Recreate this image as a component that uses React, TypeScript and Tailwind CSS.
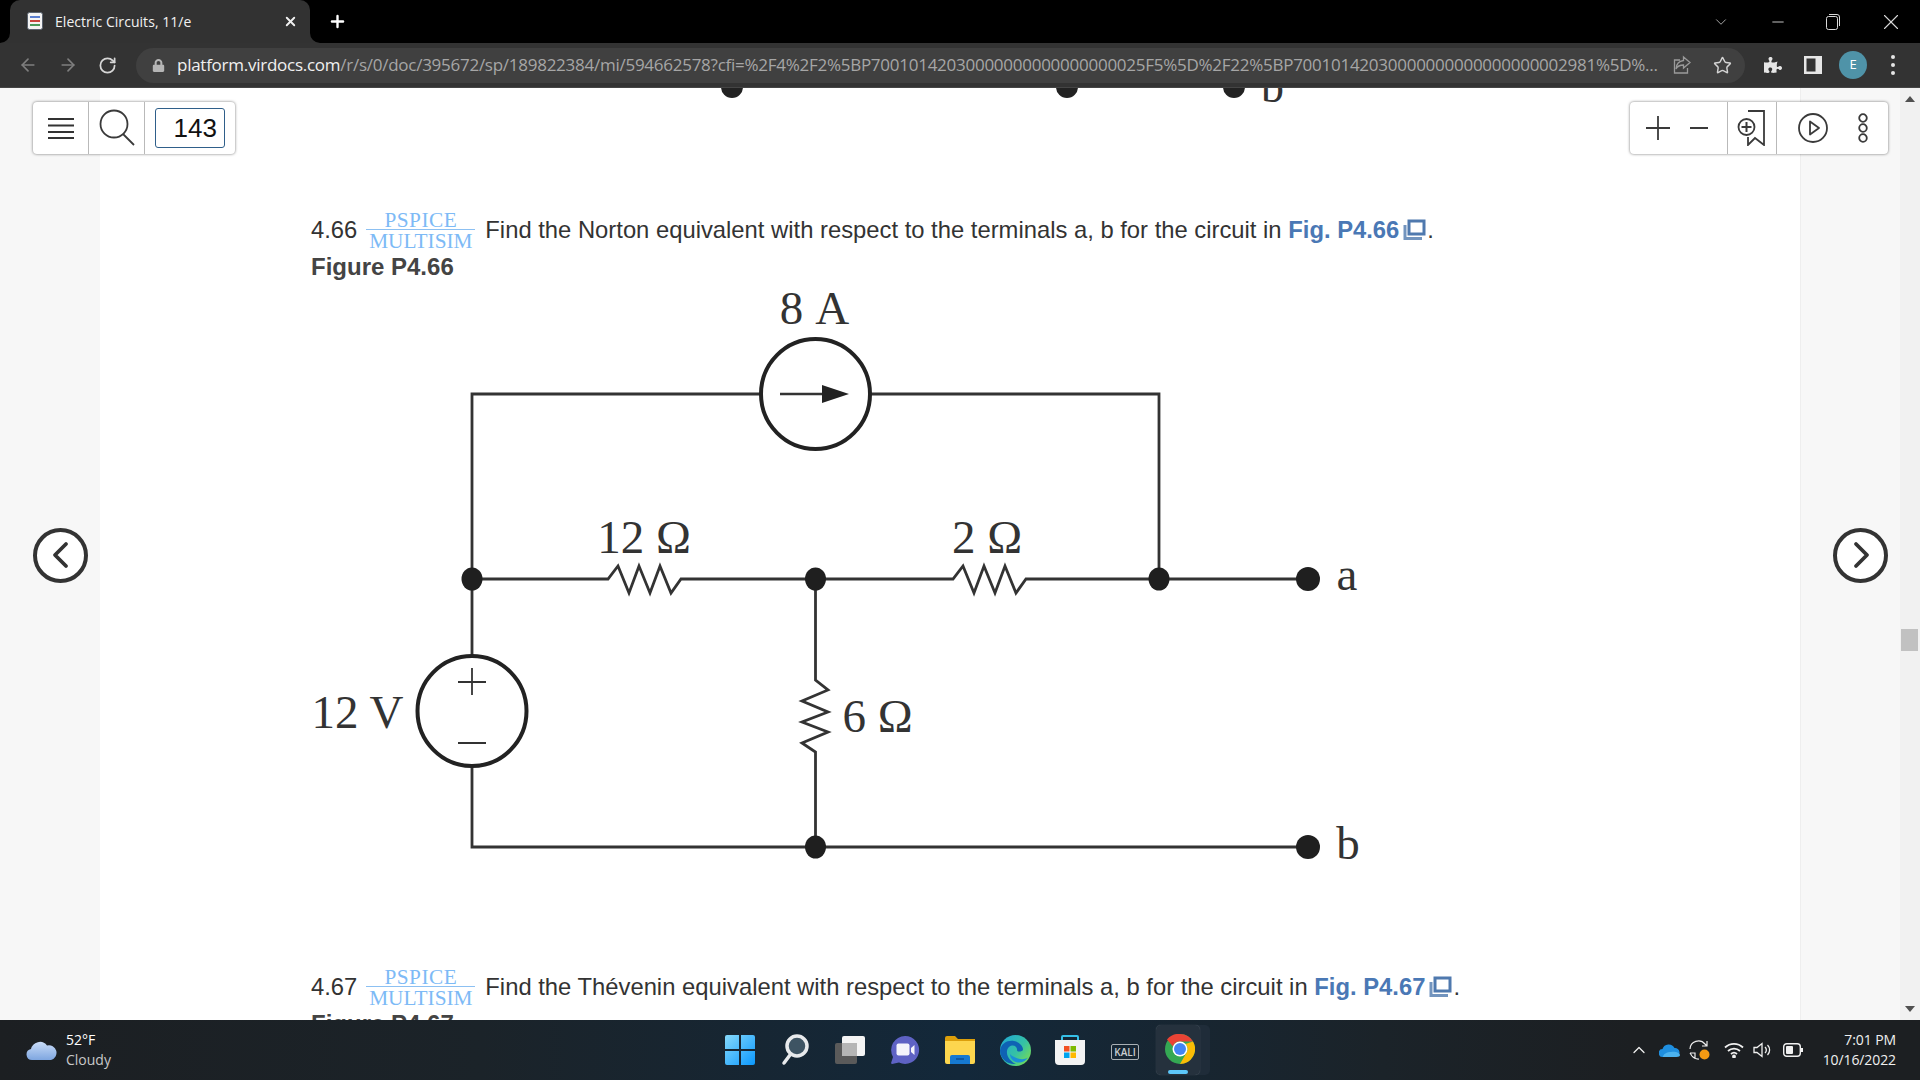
import React from "react";
import { ArrowLeft, ArrowRight, RotateCw, Star, X, Plus, ChevronDown, Minus, ChevronUp } from "lucide-react";
import { FaPuzzlePiece, FaLock } from "react-icons/fa";

const URL_PATH =
  "/r/s/0/doc/395672/sp/189822384/mi/594662578?cfi=%2F4%2F2%5BP70010142030000000000000000025F5%5D%2F22%5BP70010142030000000000000000002981%5D%...";

function TabFlare({ side }: { side: "left" | "right" }) {
  return (
    <svg
      width="10"
      height="10"
      viewBox="0 0 10 10"
      className={side === "left" ? "absolute bottom-0 -left-[10px]" : "absolute bottom-0 -right-[10px] -scale-x-100"}
    >
      <path d="M10 0v10H0a10 10 0 0 0 10-10z" fill="#323232" />
    </svg>
  );
}

function BrowserChrome() {
  return (
    <div className="shrink-0 font-['Open_Sans',sans-serif]">
      <div className="flex h-[43px] items-end bg-black pl-[10px]">
        <div className="relative flex h-[43px] w-[300px] items-center rounded-t-[10px] bg-[#323232] pb-[1px] pl-[17px]">
          <TabFlare side="left" />
          <TabFlare side="right" />
          <svg width="16" height="18" viewBox="0 0 16 18">
            <rect x="0.5" y="0.5" width="15" height="17" rx="2" fill="#f4f4f4" stroke="#5b6470" />
            <rect x="3" y="4" width="10" height="2" fill="#5b7fd0" />
            <rect x="3" y="8" width="10" height="2" fill="#c8453f" />
            <rect x="3" y="12" width="10" height="2" fill="#4a9a5c" />
          </svg>
          <span className="ml-[12px] text-[14px] tracking-[0.05px] text-[#f1f1f1]">Electric Circuits, 11/e</span>
          <X size={15} strokeWidth={3} className="absolute left-[273px] text-[#f0f0f0]" />
          <Plus size={19} strokeWidth={3} className="absolute left-[318px] text-white" />
        </div>
        <div className="ml-auto flex h-[43px] items-center text-[#d8d8d8]">
          <ChevronDown size={18} strokeWidth={1} className="mr-[39px]" />
          <Minus size={18} strokeWidth={1.2} className="mr-[39px]" />
          <svg width="14" height="16" viewBox="0 0 14 16" fill="none" stroke="currentColor" className="mr-[38px]">
            <rect x="0.5" y="2.5" width="11" height="13" rx="2" />
            <path d="M3 .5h8a2.5 2.5 0 0 1 2.5 2.5v9" />
          </svg>
          <X size={26} strokeWidth={1} className="mr-[16px]" />
        </div>
      </div>
      <div className="flex h-[45px] items-center border-b border-[#454545] bg-[#333333] pl-[18px]">
        <ArrowLeft size={20} className="text-[#7f7f7f]" />
        <ArrowRight size={20} className="ml-[20px] text-[#7f7f7f]" />
        <RotateCw size={19} strokeWidth={2.2} className="ml-[20px] text-[#d6d6d6]" />
        <div className="ml-[19px] flex h-[35px] w-[1609px] items-center rounded-full bg-[#404040] pl-[16px]">
          <FaLock size={13} className="text-[#b5b5b5]" />
          <div className="ml-[12px] w-[1483px] shrink-0 overflow-hidden whitespace-nowrap text-[17px] tracking-[-0.26px]">
            <span className="text-[#f0f0f0]">platform.virdocs.com</span>
            <span className="text-[#a6a6a6]">{URL_PATH}</span>
          </div>
          <svg width="20" height="20" viewBox="0 0 20 20" fill="none" stroke="#9a9a9a" strokeWidth="1.3" className="ml-[12px]">
            <path d="M8 5H2.5v13h13v-5" />
            <path d="M11.5 2l6.5 5.5-6.5 5.5v-3c-3.5 0-6 1-7.5 4 .3-4.500 3-8 7.500-8.500z" />
          </svg>
          <Star size={19} strokeWidth={1.8} className="ml-[21px] text-[#d4d4d4]" />
        </div>
        <FaPuzzlePiece size={18} className="ml-[19px] text-[#e6e6e6]" />
        <svg width="18" height="18" viewBox="0 0 18 18" className="ml-[22px]">
          <rect width="18" height="18" fill="#e6e6e6" />
          <rect x="2.500" y="2.500" width="9" height="13" fill="#333333" />
        </svg>
        <div className="ml-[17px] flex h-[28px] w-[28px] items-center justify-center rounded-full bg-[#4f93a8] text-[13px] text-white">
          E
        </div>
        <div className="ml-[24px] flex flex-col gap-[4px]">
          <span className="h-[4px] w-[4px] rounded-full bg-[#e6e6e6]" />
          <span className="h-[4px] w-[4px] rounded-full bg-[#e6e6e6]" />
          <span className="h-[4px] w-[4px] rounded-full bg-[#e6e6e6]" />
        </div>
      </div>
    </div>
  );
}

function Fraction() {
  return (
    <span className="ml-[9px] mr-[10px] inline-flex w-[109px] flex-col items-center font-['Liberation_Serif',serif] text-[21.3px] leading-[20px] text-[#7dbaf6]">
      <span className="-mb-[1px] h-[20px] tracking-[0.5px]">PSPICE</span>
      <span className="h-[1px] w-full bg-[#8cc0f2]" />
      <span className="mt-[1px] h-[20px]">MULTISIM</span>
    </span>
  );
}

function PopupIcon() {
  return (
    <svg width="23" height="22" viewBox="0 0 23 22" fill="none" stroke="#4f79ae" className="ml-[4px] mr-[1px] inline-block align-[-3px]">
      <rect x="6" y="2" width="15" height="13" strokeWidth="3" />
      <path d="M2 6v13.500h17" strokeWidth="3" opacity="0.8" />
    </svg>
  );
}

function Problem({ num, text, fig }: { num: string; text: string; fig: string }) {
  return (
    <p className="flex h-[43px] items-center whitespace-nowrap font-['Liberation_Sans',sans-serif] text-[23.8px] text-[#333333]">
      <span className="-mt-[1px]">{num}</span>
      <Fraction />
      <span className="-mt-[1px]">
        {text} <b className="font-bold text-[#4a78b5]">{fig}</b>
        <PopupIcon />.
      </span>
    </p>
  );
}

function ClippedFigure() {
  // tail end of the previous page's figure, runs under the browser toolbar
  return (
    <svg viewBox="311 88 1100 16" className="block h-[16px] w-[1100px]" fill="#222222">
      <circle cx="732" cy="87" r="11" />
      <circle cx="1067" cy="87" r="11" />
      <circle cx="1234" cy="87" r="11" />
      <text x="1261" y="102" fontSize="46" fill="#333333" fontFamily="'Liberation Serif', serif">
        b
      </text>
    </svg>
  );
}

function Circuit() {
  const labelFont = "'Liberation Serif', serif";
  return (
    <svg viewBox="311 280 1100 590" className="block h-[590px] w-[1100px]" fill="none">
      <g stroke="#333333" strokeWidth="2.8">
        <path d="M760 394H472V656M871 394H1159V579" />
        <path d="M472 579H608L618 566L629 593L639 566L650 593L660 566L671 593L681 579H953L963 566L974 593L984 566L995 593L1005 566L1016 593L1026 579H1308" />
        <path d="M472 767V847H1308" />
        <path d="M815.500 579V680L828 690L802 701L828 712L802 722L828 732L802 743L815.500 752V847" />
      </g>
      <ellipse cx="815.5" cy="394" rx="54.500" ry="55" stroke="#222222" strokeWidth="4" fill="white" />
      <path d="M780 394H825" stroke="#333333" strokeWidth="2.6" />
      <path d="M822 385L849 394L822 403Z" fill="#222222" />
      <ellipse cx="472" cy="711" rx="54.500" ry="55" stroke="#222222" strokeWidth="4" />
      <path d="M458 682H486M472 668V695M458 743H486" stroke="#333333" strokeWidth="1.8" />
      <g fill="#1f1f1f">
        <ellipse cx="472" cy="579" rx="10.500" ry="11.500" />
        <ellipse cx="815.500" cy="579" rx="10.500" ry="11.500" />
        <ellipse cx="1159" cy="579" rx="10.500" ry="11.500" />
        <ellipse cx="815.500" cy="847" rx="10.500" ry="11.500" />
        <circle cx="1308" cy="579" r="12" />
        <circle cx="1308" cy="847" r="12" />
      </g>
      <g fill="#333333" fontFamily={labelFont} fontSize="47">
        <text x="814.5" y="324" textAnchor="middle" wordSpacing="3">8 A</text>
        <text x="644" y="553" textAnchor="middle">12 Ω</text>
        <text x="987" y="553" textAnchor="middle">2 Ω</text>
        <text x="1347" y="590" textAnchor="middle">a</text>
        <text x="1348" y="859" textAnchor="middle">b</text>
        <text x="357.500" y="728" textAnchor="middle">12 V</text>
        <text x="877.500" y="732" textAnchor="middle">6 Ω</text>
      </g>
    </svg>
  );
}

function ViewerToolbars() {
  return (
    <>
      <div className="absolute left-[33px] top-[14px] flex h-[52px] w-[202px] items-center rounded-[4px] bg-white shadow-[0_0_3px_rgba(0,0,0,0.55)]">
        <div className="flex h-full w-[56px] items-center justify-center border-r border-[#b9b9b9]">
          <svg width="28" height="24" viewBox="0 0 28 24" stroke="#333333" strokeWidth="1.800">
            <path d="M1 3H27M1 9.500H27M1 16H27M1 22H27" />
          </svg>
        </div>
        <div className="flex h-full w-[56px] items-center justify-center border-r border-[#b9b9b9]">
          <svg width="38" height="38" viewBox="0 0 38 38" fill="none" stroke="#3a3a3a" strokeWidth="1.800">
            <circle cx="16" cy="15" r="13.500" />
            <path d="M25 25L36 36" />
          </svg>
        </div>
        <div className="ml-[10px] flex h-[40px] w-[70px] items-center justify-end rounded-[3px] border border-[#2f5f8a] pr-[7px] font-['Liberation_Sans',sans-serif] text-[26px] text-[#111111]">
          143
        </div>
      </div>
      <div className="absolute right-[32px] top-[14px] flex h-[52px] w-[258px] items-center rounded-[4px] bg-white shadow-[0_0_3px_rgba(0,0,0,0.55)]">
        <div className="flex h-full w-[98px] items-center border-r border-[#b9b9b9] pl-[16px]">
          <svg width="24" height="24" viewBox="0 0 24 24" stroke="#3a3a3a" strokeWidth="1.800">
            <path d="M12 0V24M0 12H24" />
          </svg>
          <svg width="18" height="4" viewBox="0 0 18 4" stroke="#3a3a3a" strokeWidth="2" className="ml-[20px]">
            <path d="M0 2H18" />
          </svg>
        </div>
        <div className="flex h-full w-[49px] items-center justify-center border-r border-[#b9b9b9]">
          <svg width="30" height="36" viewBox="0 0 30 36" fill="none" stroke="#3a3a3a" strokeWidth="1.800">
            <path d="M11 1H27V35L18 28L11 35V27" />
            <circle cx="9.500" cy="17" r="8" fill="white" />
            <path d="M9.500 12V22M4.500 17H14.500" strokeWidth="2" />
          </svg>
        </div>
        <svg width="30" height="30" viewBox="0 0 30 30" fill="none" stroke="#3a3a3a" strokeWidth="1.800" className="ml-[21px]">
          <circle cx="15" cy="15" r="14" />
          <path d="M12 8.500L21 15L12 21.500Z" strokeLinejoin="round" />
        </svg>
        <svg width="10" height="30" viewBox="0 0 10 30" fill="none" stroke="#3a3a3a" strokeWidth="1.800" className="ml-[30px]">
          <circle cx="5" cy="5" r="3.800" />
          <circle cx="5" cy="15" r="3.800" />
          <circle cx="5" cy="25" r="3.800" />
        </svg>
      </div>
    </>
  );
}

function SideArrow({ dir }: { dir: "left" | "right" }) {
  return (
    <div className="flex h-[55px] w-[55px] items-center justify-center rounded-full border-[4px] border-[#333333] bg-white">
      <svg width="20" height="30" viewBox="0 0 20 30" fill="none" stroke="#333333" strokeWidth="3.800" strokeLinecap="round" strokeLinejoin="round">
        {dir === "left" ? <path d="M15 4L4 15L15 26" /> : <path d="M5 4L16 15L5 26" />}
      </svg>
    </div>
  );
}

function Page() {
  return (
    <div className="relative flex min-h-0 flex-1 overflow-hidden bg-white">
      <div className="flex w-[100px] shrink-0 items-center bg-[#f7f7f7] pl-[33px] pt-[2px]">
        <SideArrow dir="left" />
      </div>
      <div className="min-w-0 flex-1 overflow-hidden pl-[211px]">
        <ClippedFigure />
        <div className="mt-[105px]">
          <Problem
            num="4.66"
            text="Find the Norton equivalent with respect to the terminals a, b for the circuit in"
            fig="Fig. P4.66"
          />
        </div>
        <p className="h-[30px] font-['Liberation_Sans',sans-serif] text-[24px] font-bold leading-[30px] text-[#444444]">
          Figure P4.66
        </p>
        <div className="-mt-[2px]">
          <Circuit />
        </div>
        <div className="mt-[96px]">
          <Problem
            num="4.67"
            text="Find the Thévenin equivalent with respect to the terminals a, b for the circuit in"
            fig="Fig. P4.67"
          />
        </div>
        <p className="h-[30px] font-['Liberation_Sans',sans-serif] text-[24px] font-bold leading-[30px] text-[#444444]">
          Figure P4.67
        </p>
      </div>
      <div className="flex w-[100px] shrink-0 items-center border-l border-[#eeeeee] bg-[#f7f7f7] pl-[32px] pt-[2px]">
        <SideArrow dir="right" />
      </div>
      <div className="relative w-[20px] shrink-0 bg-[#f1f1f1]">
        <svg width="10" height="6" viewBox="0 0 10 6" className="absolute left-[5px] top-[8px]">
          <path d="M5 0L10 6H0Z" fill="#505050" />
        </svg>
        <div className="absolute left-[1px] top-[541px] h-[22px] w-[17px] bg-[#c1c1c1]" />
        <svg width="10" height="6" viewBox="0 0 10 6" className="absolute bottom-[8px] left-[5px]">
          <path d="M0 0H10L5 6Z" fill="#505050" />
        </svg>
      </div>
      <ViewerToolbars />
    </div>
  );
}

function TaskIcon({ children, active }: { children: React.ReactNode; active?: boolean }) {
  return (
    <div className={active ? "relative flex h-[50px] w-[55px] items-center justify-center" : "flex h-[50px] w-[55px] items-center justify-center"}>
      {active && (
        <>
          <div className="absolute left-[8px] top-0 h-[50px] w-[49px] rounded-[5px] bg-[#1f2c39]" />
          <div className="absolute left-[3px] top-0 h-[50px] w-[44px] rounded-[5px] bg-[#25313d] shadow-[0_0_1px_rgba(255,255,255,0.3)]" />
          <div className="absolute bottom-[1px] left-[15px] h-[4px] w-[20px] rounded-full bg-[#5cc7fa]" />
        </>
      )}
      <div className={active ? "relative -ml-[1px] -mt-[3px]" : ""}>{children}</div>
    </div>
  );
}

function Taskbar() {
  return (
    <div className="grid h-[60px] shrink-0 grid-cols-[1fr_auto_1fr] items-center bg-[linear-gradient(90deg,#1c1f22_0%,#1b2329_25%,#13283a_50%,#1b2329_72%,#1c1f22_85%)] font-['Open_Sans',sans-serif] text-[14px]">
      <div className="flex items-center pl-[26px]">
        <svg width="31" height="22" viewBox="0 0 31 22">
          <defs>
            <linearGradient id="cloud" x1="0" y1="0" x2="0" y2="1">
              <stop offset="0" stopColor="#c9dcf8" />
              <stop offset="1" stopColor="#7ea6e0" />
            </linearGradient>
          </defs>
          <path d="M6 21a5.500 5.500 0 0 1-1-10.900A9 9 0 0 1 21 6.500a7.300 7.300 0 0 1 4 14.500z" fill="url(#cloud)" />
        </svg>
        <div className="ml-[9px] flex flex-col leading-[20px]">
          <span className="text-white">52°F</span>
          <span className="text-[#c8c8c8]">Cloudy</span>
        </div>
      </div>

      <div className="flex items-center">
        <TaskIcon>
          <svg width="30" height="30" viewBox="0 0 30 30">
            <defs>
              <linearGradient id="win" x1="0" y1="0" x2="1" y2="1">
                <stop offset="0" stopColor="#86d9fb" />
                <stop offset="1" stopColor="#0b98fd" />
              </linearGradient>
            </defs>
            <path d="M2 0H14V14H0V2a2 2 0 0 1 2-2zM16 0H28a2 2 0 0 1 2 2V14H16zM0 16H14V30H2a2 2 0 0 1-2-2zM16 16H30V28a2 2 0 0 1-2 2H16z" fill="url(#win)" />
          </svg>
        </TaskIcon>
        <TaskIcon>
          <svg width="28" height="32" viewBox="0 0 28 32" fill="none" strokeLinecap="round">
            <circle cx="16" cy="12" r="10" fill="#3e5463" stroke="#e8eaec" strokeWidth="3.500" />
            <path d="M9 21L3 29" stroke="#e8eaec" strokeWidth="3.500" />
          </svg>
        </TaskIcon>
        <TaskIcon>
          <svg width="30" height="28" viewBox="0 0 30 28">
            <rect x="0" y="7" width="22" height="21" rx="2" fill="#5a5a5a" />
            <rect x="7" y="0" width="23" height="20" rx="2" fill="#f4f4f4" />
            <rect x="7" y="7" width="15" height="13" fill="#b5b5b5" />
          </svg>
        </TaskIcon>
        <TaskIcon>
          <svg width="30" height="30" viewBox="0 0 30 30">
            <path d="M15 1a14 14 0 1 1-6 26.600L2 29c-1 0-1-1-.7-1.800L3 22A14 14 0 0 1 15 1z" fill="#5e62c4" />
            <rect x="6.500" y="8.500" width="13" height="12" rx="2" fill="#f4f4fb" />
            <path d="M21 13l3.500-3v10L21 17z" fill="#f4f4fb" />
          </svg>
        </TaskIcon>
        <TaskIcon>
          <svg width="30" height="28" viewBox="0 0 30 28">
            <path d="M0 2a2 2 0 0 1 2-2h8l3 3h17v6H0z" fill="#dc9f0b" />
            <path d="M0 5h30v21a2 2 0 0 1-2 2H2a2 2 0 0 1-2-2z" fill="#fdd64e" />
            <path d="M5 28v-7a2 2 0 0 1 2-2h16a2 2 0 0 1 2 2v7z" fill="#1679d0" />
            <path d="M11 23h8" stroke="#0c4f94" strokeWidth="1.500" />
          </svg>
        </TaskIcon>
        <TaskIcon>
          <svg width="31" height="31" viewBox="0 0 31 31">
            <defs>
              <linearGradient id="edge" x1="0" y1="0" x2="1" y2="0.800">
                <stop offset="0" stopColor="#1ea6d8" />
                <stop offset="0.600" stopColor="#35c1a5" />
                <stop offset="1" stopColor="#76dc54" />
              </linearGradient>
            </defs>
            <circle cx="15.500" cy="15.500" r="15.500" fill="url(#edge)" />
            <path d="M0 15.500C1 8 8 5 14 6c5 1 9 5 9 8.500 0 1.500-2 2-4 2-1 0-2-.5-2-1 .5-3-2-5.500-5-5-3.500.5-5.500 4-5 8 .5 4 4 8.500 9 10.500C8 30 0 24 0 15.500z" fill="#0f62b4" />
            <path d="M10 19c0 6 6 9 10 8.500 3-.5 6-2 8-5-3 2-7 2-10 1-4-1.500-7-3-8-4.500z" fill="#1a8fd8" />
          </svg>
        </TaskIcon>
        <TaskIcon>
          <svg width="30" height="30" viewBox="0 0 30 30">
            <path d="M7 6V2a1 1 0 0 1 1-1h14a1 1 0 0 1 1 1v4" fill="none" stroke="#35c0e8" strokeWidth="2" />
            <path d="M0 5h30v21a4 4 0 0 1-4 4H4a4 4 0 0 1-4-4z" fill="#f3f3f3" />
            <rect x="9" y="11" width="5.500" height="5.500" fill="#f25022" />
            <rect x="15.500" y="11" width="5.500" height="5.500" fill="#7fba00" />
            <rect x="9" y="17.500" width="5.500" height="5.500" fill="#00a4ef" />
            <rect x="15.500" y="17.500" width="5.500" height="5.500" fill="#ffb900" />
          </svg>
        </TaskIcon>
        <TaskIcon>
          <span className="-mt-[2px] rounded-[2px] border-[1.5px] border-[#a9b0b5] px-[2px] text-[10px] font-semibold leading-[11px] text-[#c9ced1]">
            KALI
          </span>
        </TaskIcon>
        <TaskIcon active>
          <svg width="30" height="30" viewBox="0 0 30 30">
            <circle cx="15" cy="15" r="15" fill="#34a853" />
            <path d="M15 0a15 15 0 0 1 13 7.500H15a7.500 7.500 0 0 0-7.100 5L2 5.500A15 15 0 0 1 15 0z" fill="#ea4335" />
            <path d="M28 7.500A15 15 0 0 1 15 30l6.500-11.300A7.500 7.500 0 0 0 20.500 10z" fill="#fbbc05" />
            <circle cx="15" cy="15" r="7.500" fill="white" />
            <circle cx="15" cy="15" r="6" fill="#4285f4" />
          </svg>
        </TaskIcon>
      </div>

      <div className="flex items-center justify-end pr-[24px] text-[#f0f0f0]">
        <ChevronUp size={20} strokeWidth={1.5} />
        <svg width="21" height="14" viewBox="0 0 21 14" className="ml-[10px]">
          <path d="M4 14a4 4 0 0 1-.500-8A6.500 6.500 0 0 1 15.500 5a4.500 4.500 0 0 1 1 9z" fill="#1f8fe0" />
          <path d="M4 14c0-3 4-5 8-5 4-1 9 1 9 3 0 1-1 2-4 2z" fill="#4cb3f0" />
        </svg>
        <svg width="22" height="22" viewBox="0 0 22 22" fill="none" stroke="#eeeeee" strokeWidth="1.200" className="ml-[9px]">
          <path d="M1 10a8.500 8.500 0 0 1 15-5l2 2M18 2v5h-5" />
          <path d="M1 14h5v5M1 14l2 3a8 8 0 0 0 7 3" />
          <circle cx="15.500" cy="15.500" r="5" fill="#f59a13" stroke="none" />
        </svg>
        <svg width="20" height="16" viewBox="0 0 20 16" fill="none" stroke="#f0f0f0" strokeWidth="1.800" className="ml-[13px]">
          <path d="M1 5.500a13 13 0 0 1 18 0M4 9a9 9 0 0 1 12 0M7 12a4.500 4.500 0 0 1 6 0" />
          <circle cx="10" cy="14.500" r="1" fill="#f0f0f0" />
        </svg>
        <svg width="20" height="16" viewBox="0 0 20 16" fill="none" stroke="#f0f0f0" strokeWidth="1.300" className="ml-[9px]">
          <path d="M1 5.500h3L9 1.500v13l-5-4H1z" />
          <path d="M12 5a4 4 0 0 1 0 6M14.500 3a7 7 0 0 1 0 10" />
        </svg>
        <svg width="20" height="14" viewBox="0 0 20 14" className="ml-[10px]">
          <rect x="0.700" y="0.700" width="16.600" height="12.600" rx="3" fill="none" stroke="#f0f0f0" strokeWidth="1.400" />
          <rect x="3" y="3" width="7" height="8" rx="1" fill="#f0f0f0" />
          <rect x="18" y="5" width="2" height="4" fill="#f0f0f0" />
        </svg>
        <div className="ml-[20px] flex flex-col items-end leading-[20px] tracking-[-0.1px]">
          <span>7:01 PM</span>
          <span>10/16/2022</span>
        </div>
      </div>
    </div>
  );
}

export default function App() {
  return (
    <div className="flex h-screen w-screen flex-col overflow-hidden">
      <BrowserChrome />
      <Page />
      <Taskbar />
    </div>
  );
}
